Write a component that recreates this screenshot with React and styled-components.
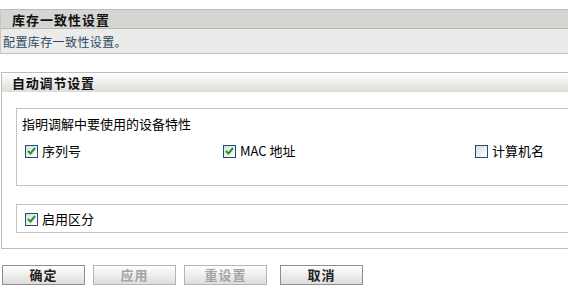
import React from "react";
import styled, { createGlobalStyle } from "styled-components";

const GlobalStyle = createGlobalStyle`
  html, body {
    margin: 0;
    padding: 0;
    background: #fff;
    overflow: hidden;
  }
  body {
    font-family: "Noto Sans CJK SC", "Liberation Sans", sans-serif;
    font-size: 13px;
    color: #000;
  }
`;

// Page ---------------------------------
const Page = styled.div`
  padding-top: 9px;
`;

// Top block --------------------------------
const TopBlock = styled.div`
  border-top: 1px solid #bdbdbb;
  border-bottom: 1px solid #bdbdbb;
  border-left: 1px solid #c8c8c6;
`;

const TopHeader = styled.div`
  height: 18px;
  background: #d5d6d1;
  border-bottom: 1px solid #b9b9b6;
  display: flex;
  align-items: center;
  padding-left: 11px;
  font-weight: bold;
  font-size: 13px;
  letter-spacing: 1px;
  color: #111;
`;

const Description = styled.div`
  height: 24px;
  background: #ebebe9;
  display: flex;
  align-items: center;
  padding-left: 2px;
  font-size: 12px;
  letter-spacing: 0.4px;
  color: #2c4a63;
`;

// Section --------------------------------
const Section = styled.div`
  margin-top: 18px;
  margin-left: 1px;
  border-top: 1px solid #bdbdbb;
  border-bottom: 1px solid #bdbdbb;
  border-left: 1px solid #c0c0bc;
`;

const SectionHeader = styled.div`
  height: 19px;
  background: linear-gradient(#ffffff, #dcdcd8);
  display: flex;
  align-items: center;
  padding-left: 10px;
  font-weight: bold;
  font-size: 13px;
  letter-spacing: 0.8px;
  color: #111;
`;

const SectionBody = styled.div`
  padding: 16px 0 15px 14px;
  display: flex;
  flex-direction: column;
  gap: 18px;
`;

const FieldBox = styled.div`
  border: 1px solid #c3c3c0;
  border-right: none;
  height: ${(p) => p.$h}px;
  box-sizing: border-box;
  padding: ${(p) => p.$pad};
`;

const Caption = styled.div`
  font-size: 13px;
  line-height: 16px;
  margin-left: 5px;
`;

const OptionGrid = styled.div`
  display: grid;
  grid-template-columns: 198px 252px 1fr;
  margin-top: 11px;
  margin-left: 8px;
`;

const Option = styled.label`
  display: flex;
  align-items: center;
  gap: 4px;
  font-size: 13px;
  line-height: 16px;
`;

const Box = styled.span`
  width: 11px;
  height: 11px;
  border: 1px solid #1c4f7c;
  background: linear-gradient(135deg, #dcdcdc, #ffffff);
  display: inline-flex;
  align-items: center;
  justify-content: center;
  flex: none;
`;

// Buttons --------------------------------
const ButtonRow = styled.div`
  display: flex;
  margin-top: 16px;
  padding-left: 2px;
`;

const Button = styled.button`
  width: 83px;
  height: 20px;
  margin-right: ${(p) => p.$gap}px;
  padding: 0;
  border: 1px solid ${(p) => (p.disabled ? "#b5b5b5" : "#8e8e8e")};
  background: linear-gradient(#ffffff, #dddddb);
  font-family: "Noto Sans CJK SC", "Liberation Sans", sans-serif;
  font-size: 13px;
  font-weight: bold;
  letter-spacing: 1px;
  color: ${(p) => (p.disabled ? "#a3a3a3" : "#222")};
  line-height: 18px;
`;

function CheckBox({ checked }) {
  return (
    <Box>
      {checked && (
        <svg width="9" height="8" viewBox="0 0 9 8">
          <path d="M1 4 L3.5 6.5 L8 1" stroke="#1f9b25" strokeWidth="2" fill="none" />
        </svg>
      )}
    </Box>
  );
}

export default function App() {
  return (
    <Page>
      <GlobalStyle />
      <TopBlock>
        <TopHeader>库存一致性设置</TopHeader>
        <Description>配置库存一致性设置。</Description>
      </TopBlock>

      <Section>
        <SectionHeader>自动调节设置</SectionHeader>
        <SectionBody>
          <FieldBox $h={78} $pad="7px 0 0 0">
            <Caption>指明调解中要使用的设备特性</Caption>
            <OptionGrid>
              <Option>
                <CheckBox checked />
                序列号
              </Option>
              <Option>
                <CheckBox checked />
                MAC 地址
              </Option>
              <Option>
                <CheckBox />
                计算机名
              </Option>
            </OptionGrid>
          </FieldBox>
          <FieldBox $h={29} $pad="6px 0 0 8px">
            <Option>
              <CheckBox checked />
              启用区分
            </Option>
          </FieldBox>
        </SectionBody>
      </Section>

      <ButtonRow>
        <Button $gap={8}>确定</Button>
        <Button $gap={8} disabled>应用</Button>
        <Button $gap={13} disabled>重设置</Button>
        <Button $gap={0}>取消</Button>
      </ButtonRow>
    </Page>
  );
}
